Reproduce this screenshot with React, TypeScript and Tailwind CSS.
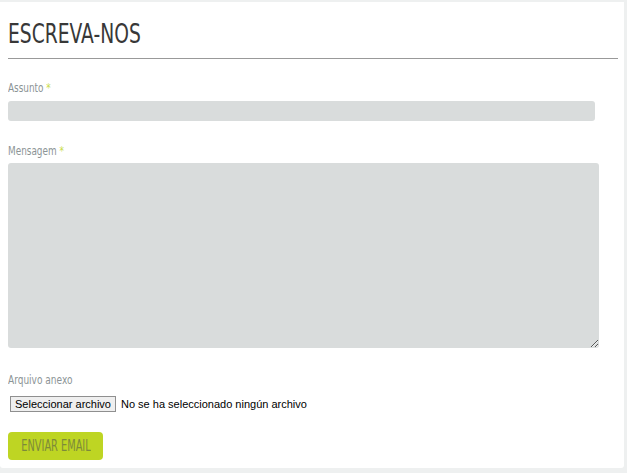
import React from "react";

const cond = { fontFamily: '"DejaVu Sans Condensed", "Liberation Sans", sans-serif' };

export default function App() {
  return (
    <div className="w-[627px] h-[473px] bg-[#eef0f0] overflow-hidden">
      <div className="mt-[2px] h-[466px] w-[624px] bg-white rounded-b-[3px] px-2 pt-[17px]" style={cond}>
        <h1 className="text-[26px] leading-[30px] text-[#383838]">
          <span className="inline-block origin-left scale-x-[0.8] whitespace-nowrap">ESCREVA-NOS</span>
        </h1>
        <div className="mt-[9px] h-px w-[610px] bg-[#999]" />

        <label className="mt-[21px] block text-[13px] leading-[16px] text-[#8c9496]">
          <span className="inline-block origin-left scale-x-[0.76] whitespace-nowrap">
            Assunto <span className="text-[#c8dc4c]">*</span>
          </span>
        </label>
        <input className="mt-[5px] block h-[20px] w-[587px] rounded-[3px] bg-[#d9dcdc] outline-none" />

        <label className="mt-[22px] block text-[13px] leading-[16px] text-[#8c9496]">
          <span className="inline-block origin-left scale-x-[0.76] whitespace-nowrap">
            Mensagem <span className="text-[#c8dc4c]">*</span>
          </span>
        </label>
        <textarea className="mt-[4px] block h-[185px] w-[591px] rounded-[3px] bg-[#d9dcdc] outline-none" />

        <label className="mt-[24px] block text-[13px] leading-[16px] text-[#8c9496]">
          <span className="inline-block origin-left scale-x-[0.77] whitespace-nowrap">Arquivo anexo</span>
        </label>
        <div
          className="mt-[8px] flex items-center gap-[5px] pl-[2px] text-[11px] text-black"
          style={{ fontFamily: '"Liberation Sans", Arial, sans-serif' }}
        >
          <span className="flex h-[16px] items-center border border-[#8f8f8f] bg-[#efefef] px-[4px] leading-none">
            Seleccionar archivo
          </span>
          <span>No se ha seleccionado ningún archivo</span>
        </div>

        <button className="mt-[19px] flex h-[28px] w-[95px] items-center justify-center rounded-[4px] bg-[#bed523] text-[16px] text-[#7d8a3a]">
          <span className="inline-block scale-x-[0.68] whitespace-nowrap">ENVIAR EMAIL</span>
        </button>
      </div>
    </div>
  );
}
